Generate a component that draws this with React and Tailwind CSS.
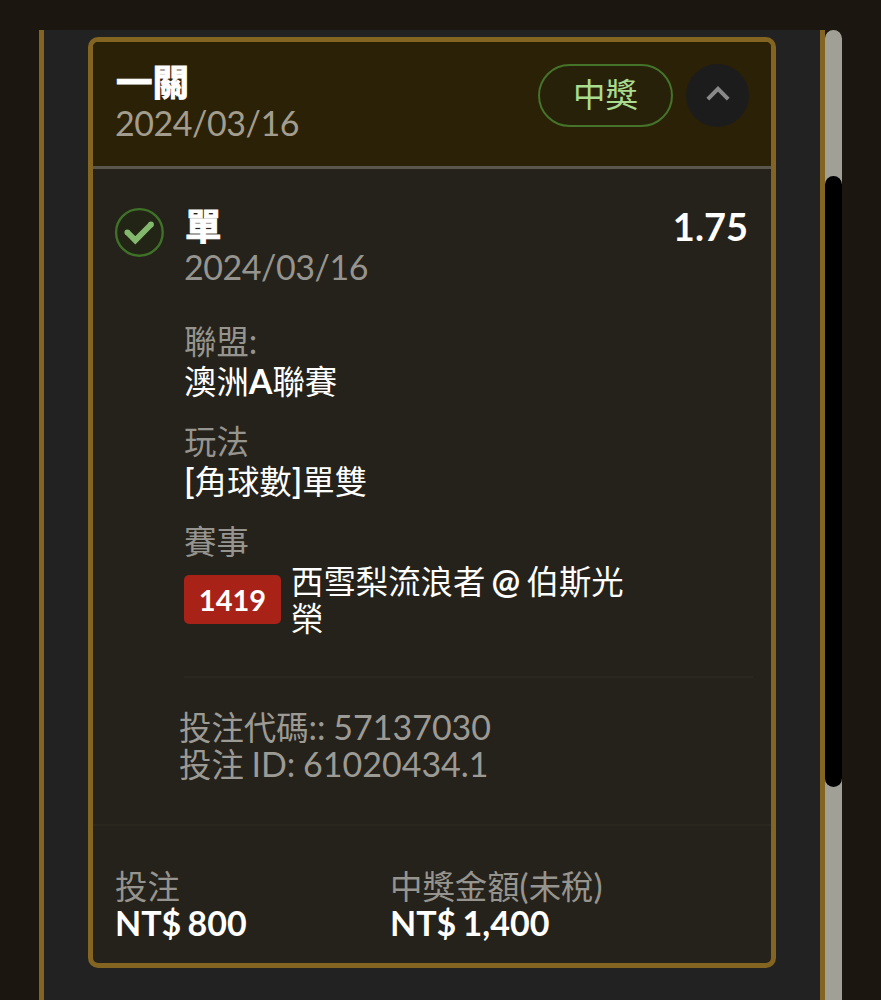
import clsx from 'clsx';

const bet = {
  title: '一關',
  date: '2024/03/16',
  status: '中獎',
  pick: '單',
  odds: '1.75',
  matchNo: '1419',
  code: '57137030',
  id: '61020434.1',
};

// Chinese runs sit slightly smaller than the latin text next to them
function Zh({ children, className }) {
  return <span className={clsx('text-[32.4px] leading-none font-normal', className)}>{children}</span>;
}

function Label({ children }) {
  return <div className="text-[#96948f] whitespace-nowrap">{children}</div>;
}

function Value({ children }) {
  return <div className="text-white font-bold whitespace-nowrap">{children}</div>;
}

function CardHeader() {
  return (
    <div className="h-[127px] shrink-0 flex justify-between bg-[#2b2106] border-b-[3px] border-[#5b564c] pl-[22px] pr-[22px] pt-[20px]">
      <div>
        <div className="pl-px text-[36.5px] leading-[40px] font-bold text-white [-webkit-text-stroke:1px_white]">{bet.title}</div>
        <div className="text-[#a39d90] leading-[41px] tracking-[-0.45px]">{bet.date}</div>
      </div>
      <div className="flex gap-[13px] mt-[2px]">
        <div className="w-[135px] h-[63px] rounded-full border-2 border-[#447329] bg-[#28210a] flex items-center justify-center text-[#aadc90] leading-[40px]">
          <Zh>{bet.status}</Zh>
        </div>
        <button className="w-[63px] h-[63px] rounded-full bg-[#1c1c1c] flex items-center justify-center">
          <svg width="24" height="16" viewBox="0 0 24 16" fill="none" stroke="#898989" strokeWidth="4" className="-mt-[5px]">
            <path d="M1.8 14.2 12 3.8 22.2 14.2" />
          </svg>
        </button>
      </div>
    </div>
  );
}

function Selection() {
  return (
    <div className="flex pl-[21px] pr-[23px] pt-[38px]">
      <svg width="50" height="50" viewBox="0 0 50 50" fill="none" className="shrink-0">
        <circle cx="25.4" cy="25.4" r="23.3" fill="#222416" stroke="#3f7128" strokeWidth="2.4" />
        <path d="M13.3 25.3 21.3 33.4 37 17.5" stroke="#82b96d" strokeWidth="5.8" />
        <path d="M13.3 25.3h.01M37 17.5h.01" stroke="#82b96d" strokeWidth="5.8" strokeLinecap="round" />
      </svg>
      <div className="flex-1 ml-5">
        <div className="flex justify-between leading-[38px] text-white font-bold">
          <div className="pl-px text-[36.5px] [-webkit-text-stroke:1px_white]">{bet.pick}</div>
          <div className="text-[38px]">{bet.odds}</div>
        </div>
        <div className="text-[#96948f] leading-[44px] tracking-[-0.45px]">{bet.date}</div>

        <div className="mt-[32px] leading-[40px]">
          <Label><Zh>聯盟</Zh>:</Label>
          <Value><Zh>澳洲</Zh>A<Zh>聯賽</Zh></Value>
        </div>
        <div className="mt-5 leading-[40px]">
          <Label><Zh>玩法</Zh></Label>
          <Value><span className="font-semibold">[</span><Zh>角球數</Zh><span className="font-semibold">]</span><Zh>單雙</Zh></Value>
        </div>
        <div className="mt-5 leading-[40px]">
          <Label><Zh>賽事</Zh></Label>
        </div>
        <div className="flex items-center gap-[10px] mt-px">
          <div className="w-[97px] h-[49px] shrink-0 rounded-[5px] bg-[#a82217] text-white text-[29px] font-bold leading-[49px] text-center">
            {bet.matchNo}
          </div>
          <div className="leading-[37px] text-white font-bold [word-spacing:-2px]">
            <div><Zh>西雪梨流浪者</Zh> @ <Zh>伯斯光</Zh></div>
            <div><Zh>榮</Zh></div>
          </div>
        </div>

        <div className="mt-10 -mr-[5px] h-[2px] bg-[#2a271f]" />

        <div className="mt-[30px] -ml-[5px] leading-[37px] text-[#9c9a95] [word-spacing:-1px]">
          <div><Zh>投注代碼</Zh>:: {bet.code}</div>
          <div><Zh>投注</Zh> ID: {bet.id}</div>
        </div>
      </div>
    </div>
  );
}

function Totals() {
  return (
    <div className="mt-[42px] border-t-2 border-[#2a271f] pt-[41px] pl-[22px] flex leading-[37px] [word-spacing:-2px]">
      <div className="w-[275px]">
        <Label><Zh>投注</Zh></Label>
        <Value>NT$ 800</Value>
      </div>
      <div>
        <Label><Zh>中獎金額</Zh>(<Zh>未稅</Zh>)</Label>
        <Value>NT$ 1,400</Value>
      </div>
    </div>
  );
}

export default function App() {
  return (
    <div className="h-[1000px] w-[881px] overflow-hidden bg-[#1b1710] pt-[30px] pl-[39px] flex text-[34px] font-[Lato,'Noto_Sans_CJK_TC',sans-serif]">
      <div className="w-[786px] h-[970px] shrink-0 border-x-[5px] border-[#836420] bg-[#222222] pt-[7px] pl-11">
        <div className="w-[688px] h-[931px] rounded-[10px] border-[5px] border-[#836420] bg-[#25221b] overflow-hidden">
          <CardHeader />
          <Selection />
          <Totals />
        </div>
      </div>
      <div className="w-[17px] h-[1100px] shrink-0 rounded-full bg-[#a1a096] pt-[146px]">
        <div className="h-[611px] rounded-full bg-black" />
      </div>
    </div>
  );
}
